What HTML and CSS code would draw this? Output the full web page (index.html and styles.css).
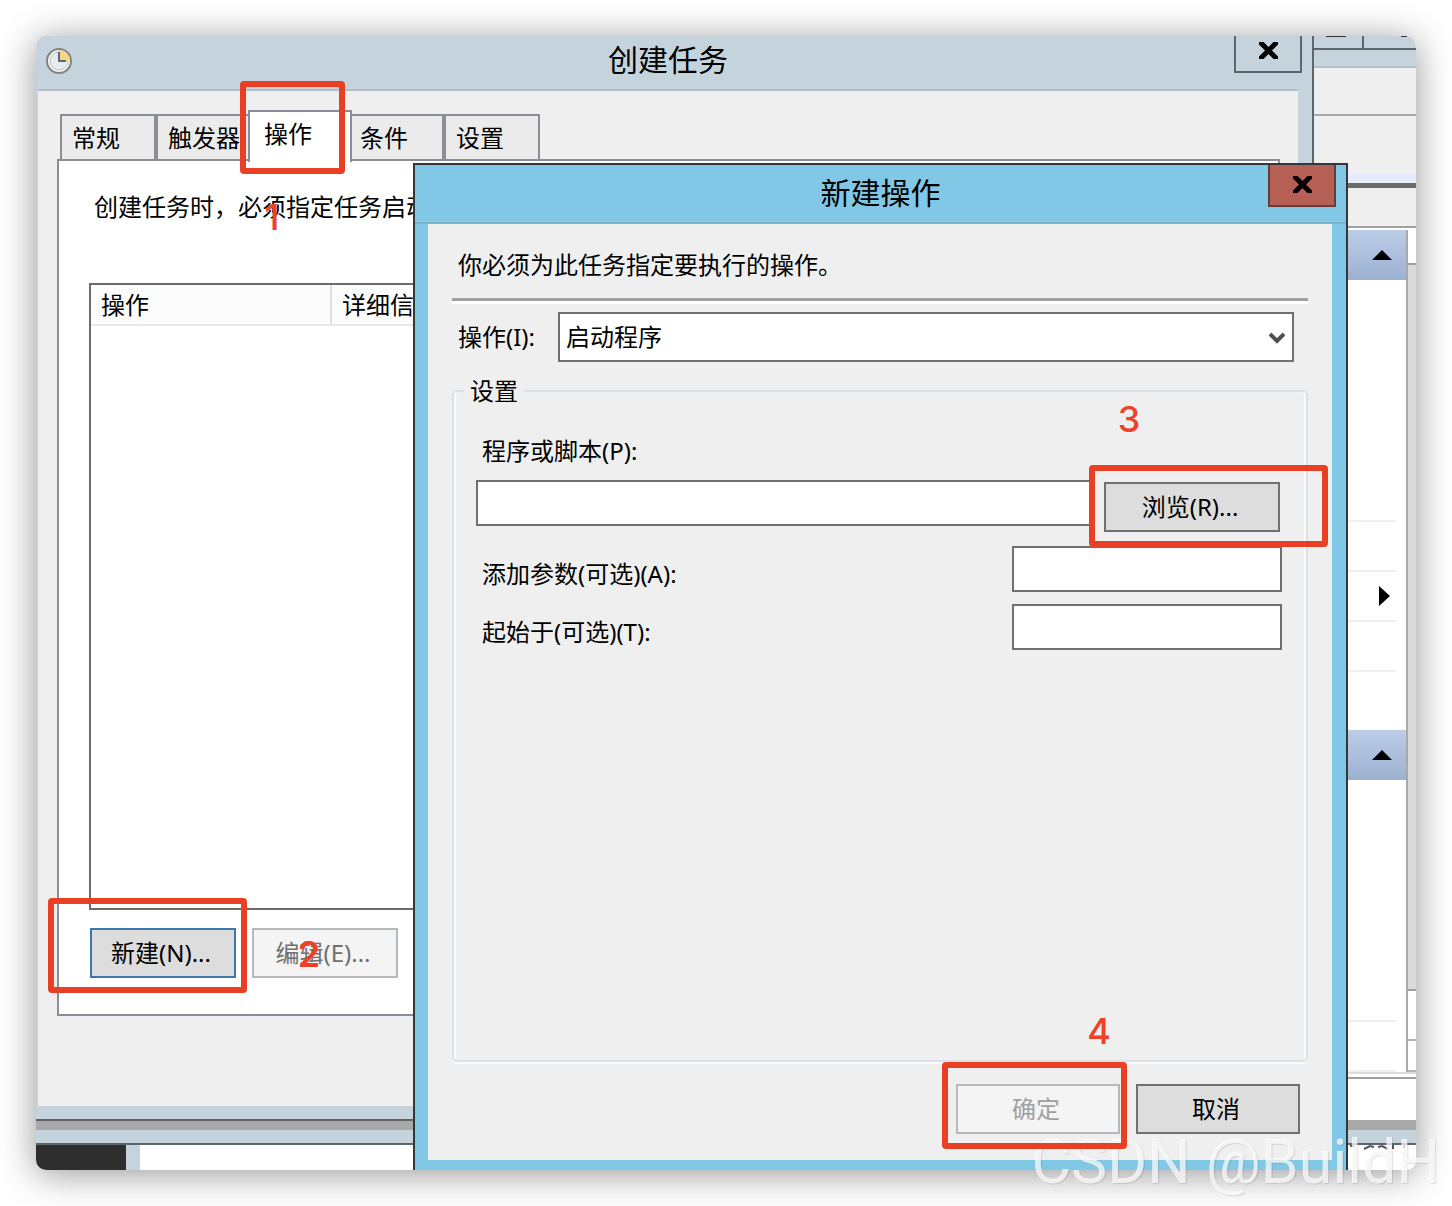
FILE: index.html
```html
<!DOCTYPE html>
<html lang="zh-CN">
<head>
    <meta charset="UTF-8">
    <meta name="viewport" content="width=device-width, initial-scale=1.0">
    <title>创建任务</title>
    <link rel="stylesheet" href="styles.css">
</head>
<body>
    <div class="desktop">

        <!-- task scheduler console behind the dialogs -->
        <div class="console">
            <div class="console-title">
                <span class="caption-box"><i class="caption-min"></i></span>
                <span class="caption-box"><i class="caption-dot"></i></span>
            </div>
            <div class="console-menu"></div>
            <div class="console-toolbar"></div>
            <div class="console-heading"></div>
            <div class="console-main">
                <div class="actions">
                    <div class="actions-head">
                        <svg width="20" height="10" viewBox="0 0 20 10"><path d="M10 0L20 10H0Z"/></svg>
                    </div>
                    <ul class="actions-list">
                        <li></li>
                        <li></li>
                        <li><svg width="11" height="20" viewBox="0 0 11 20"><path d="M0 0L11 10L0 20Z"/></svg></li>
                        <li></li>
                    </ul>
                    <div class="actions-head">
                        <svg width="20" height="10" viewBox="0 0 20 10"><path d="M10 0L20 10H0Z"/></svg>
                    </div>
                    <ul class="actions-list">
                        <li></li>
                        <li></li>
                    </ul>
                </div>
                <div class="scrollbar">
                    <div class="scroll-up"></div>
                    <div class="scroll-thumb"></div>
                    <div class="scroll-track"></div>
                    <div class="scroll-down"></div>
                </div>
            </div>
            <div class="console-status"></div>
            <div class="console-shade"></div>
            <div class="console-edge"></div>
            <div class="console-below">
                <div class="below-dark"></div>
                <div class="below-gap"></div>
                <div class="below-page">
                    <svg width="66" height="6" viewBox="0 0 66 6" fill="none" stroke="#556" stroke-width="2"><path d="M0 1h4M14 4l6-3 4 1M28 2l4-1 6 3M43 0v4M54 0v3"/></svg>
                </div>
            </div>
        </div>

        <div class="window task-window">
            <div class="titlebar">
                <svg class="clock" width="28" height="28" viewBox="0 0 28 28">
                    <circle cx="14" cy="14" r="12" fill="#f4f6f6" stroke="#85837d" stroke-width="2"/>
                    <circle cx="14" cy="14" r="9" fill="#e6edf1" stroke="#b4c0c8"/>
                    <path d="M14 14V3A11 11 0 0 1 25 14Z" fill="#f3d688"/>
                    <path d="M14 5V14H21" fill="none" stroke="#5b6a76" stroke-width="2"/>
                </svg>
                <h1>创建任务</h1>
                <button class="close" type="button" aria-label="关闭">
                    <svg width="19" height="17" viewBox="0 0 19 17"><path d="M-1 -2L20 19M20 -2L-1 19"/></svg>
                </button>
            </div>
            <div class="task-body">
                <div class="tabs" role="tablist">
                    <button class="tab" type="button" role="tab">常规</button>
                    <button class="tab" type="button" role="tab">触发器</button>
                    <button class="tab active" type="button" role="tab" aria-selected="true">操作</button>
                    <button class="tab" type="button" role="tab">条件</button>
                    <button class="tab" type="button" role="tab">设置</button>
                </div>
                <div class="tab-panel" role="tabpanel">
                    <p>创建任务时，必须指定任务启动时发生的操作。</p>
                    <div class="list">
                        <table>
                            <thead>
                                <tr><th class="col-action">操作</th><th>详细信息</th></tr>
                            </thead>
                        </table>
                    </div>
                    <div class="list-buttons">
                        <button class="btn default" type="button">新建(N)...</button>
                        <button class="btn" type="button" disabled>编辑(E)...</button>
                    </div>
                </div>
            </div>
        </div>

        <form class="window action-dialog">
            <div class="titlebar">
                <h2>新建操作</h2>
                <button class="close" type="button" aria-label="关闭">
                    <svg width="19" height="17" viewBox="0 0 19 17"><path d="M-1 -2L20 19M20 -2L-1 19"/></svg>
                </button>
            </div>
            <div class="dialog-body">
                <p>你必须为此任务指定要执行的操作。</p>
                <hr>
                <div class="action-row">
                    <label for="action">操作(I):</label>
                    <div class="select">
                        <select id="action"><option>启动程序</option></select>
                        <svg width="16" height="13" viewBox="0 0 16 13"><path d="M1 2L8 9L15 2" fill="none" stroke="#505050" stroke-width="4"/></svg>
                    </div>
                </div>
                <fieldset>
                    <legend>设置</legend>
                    <div class="fields">
                        <label for="program">程序或脚本(P):</label>
                        <div class="program-row">
                            <input id="program" type="text">
                            <button class="btn" type="button">浏览(R)...</button>
                        </div>
                        <div class="field-row">
                            <label for="args">添加参数(可选)(A):</label>
                            <input id="args" type="text">
                        </div>
                        <div class="field-row">
                            <label for="start">起始于(可选)(T):</label>
                            <input id="start" type="text">
                        </div>
                    </div>
                </fieldset>
                <div class="dialog-buttons">
                    <button class="btn" type="submit" disabled>确定</button>
                    <button class="btn" type="button">取消</button>
                </div>
            </div>
        </form>

        <!-- step markers -->
        <div class="mark mark-1"></div>
        <div class="mark mark-2"></div>
        <div class="mark mark-3"></div>
        <div class="mark mark-4"></div>
        <span class="step step-1">1</span>
        <span class="step step-2">2</span>
        <span class="step step-3">3</span>
        <span class="step step-4">4</span>
    </div>
    <div class="watermark">CSDN @BuildH</div>
</body>
</html>
```
FILE: styles.css
```css
* {
    box-sizing: border-box;
}
body {
    margin: 0;
    padding: 36px;
    height: 100vh;
    position: relative;
    overflow: hidden;
    background: #fff;
    color: #000;
    font-family: "Noto Sans", "Noto Sans CJK SC", sans-serif;
    font-size: 24px;
    line-height: 32px;
}
button, input, select {
    font: inherit;
    color: inherit;
    border-radius: 0;
    margin: 0;
}
h1, h2, p, ul {
    margin: 0;
    padding: 0;
}
svg {
    display: block;
}
.desktop {
    position: relative;
    height: 100%;
    border-radius: 10px;
    overflow: hidden;
    background: #fff;
}
/* the shadow sits on the body so the rounded desktop can clip its windows */
body::before {
    content: "";
    position: absolute;
    inset: 36px;
    border-radius: 10px;
    box-shadow: 0 4px 36px rgba(0, 0, 0, 0.42);
}

/* console */
.console {
    display: flex;
    flex-direction: column;
    height: 100%;
}
.console-title {
    height: 32px;
    display: flex;
    justify-content: flex-end;
    align-items: flex-start;
    background: #c5d4dc;
    border-bottom: 2px solid #b4bfc6;
}
.caption-box {
    display: flex;
    justify-content: center;
    width: 54px;
    height: 14px;
    border: solid #5f666b;
    border-width: 0 0 2px 2px;
}
.caption-min {
    width: 20px;
    height: 1px;
    background: #333;
}
.caption-dot {
    width: 6px;
    height: 1px;
    margin-left: 28px;
    background: #333;
}
.console-menu {
    height: 48px;
    background: #efefef;
    border-bottom: 2px solid #a9a9a9;
}
.console-toolbar {
    height: 72px;
    background: linear-gradient(#efefef 58px, #e6ecfc 58px, #e6ecfc 65px, #efefef 65px);
    border-bottom: 5px solid #6c6c6c;
}
.console-heading {
    height: 40px;
    background: #efefef;
    border-bottom: 2px solid #a0a0a0;
}
.console-main {
    flex: 1;
    display: flex;
    min-height: 0;
    padding-top: 2px;
    border-bottom: 2px solid #dcdcdc;
}
.actions {
    flex: 1;
    overflow: hidden;
}
.actions-head {
    height: 50px;
    display: flex;
    justify-content: flex-end;
    align-items: center;
    padding-right: 14px;
    background: linear-gradient(#bccde8, #9cb1d1);
}
.actions-list {
    list-style: none;
    padding: 192px 10px 0 0;
    height: 450px;
}
.actions-list li {
    height: 50px;
    display: flex;
    justify-content: flex-end;
    align-items: center;
    padding-right: 6px;
    border-bottom: 2px solid #efefef;
}
.scrollbar {
    width: 10px;
    display: flex;
    flex-direction: column;
    border-left: 2px solid #a9a9a9;
}
.scroll-up {
    height: 33px;
}
.scroll-thumb {
    flex: 1;
    background: #dadada;
    border: solid #a0a0a0;
    border-width: 2px 0;
}
.scroll-track {
    height: 48px;
}
.scroll-down {
    height: 33px;
    border: solid #b4b4b4;
    border-width: 2px 0;
}
.console-status {
    height: 43px;
    border-top: 2px solid #a0a0a0;
    margin-top: 3px;
}
.console-shade {
    height: 10px;
    background: #a9a9a9;
}
.console-edge {
    height: 15px;
    background: #c5d4dc;
    border-bottom: 2px solid #5f666b;
}
.console-below {
    height: 25px;
    display: flex;
}
.below-dark {
    width: 90px;
    background: #2e2e2e;
}
.below-gap {
    width: 14px;
    background: #c5d4dc;
}
.below-page {
    flex: 1;
    display: flex;
    justify-content: flex-end;
}

/* windows */
.window {
    position: absolute;
    display: flex;
    flex-direction: column;
}
.titlebar {
    position: relative;
    text-align: center;
}
.titlebar h1,
.titlebar h2 {
    font-size: 30px;
    font-weight: normal;
}
.close {
    position: absolute;
    top: 0;
    display: flex;
    justify-content: center;
    width: 68px;
    padding: 0;
    border: 2px solid #5f666b;
    border-top: 0;
    background: none;
}
.close svg path {
    stroke: #000;
    stroke-width: 5;
}
.btn {
    height: 50px;
    padding: 0 4px 0 0;
    border: 2px solid #707070;
    background: #ddd;
}
.btn:disabled {
    border-color: #b5b9bb;
    background: #f4f4f4;
    color: #707070;
}
.btn.default {
    border-color: #3f77ad;
}

/* create task */
.task-window {
    top: 0;
    left: 0;
    right: 102px;
    bottom: 49px;
    background: #c5d4dc;
    border: solid #5f666b;
    border-width: 0 2px 2px 0;
}
.task-window .titlebar {
    height: 53px;
    padding-right: 12px;
}
.task-window h1 {
    line-height: 48px;
}
.task-window .close {
    right: 10px;
    height: 37px;
    padding-top: 6px;
}
.clock {
    position: absolute;
    left: 9px;
    top: 11px;
}
.task-body {
    flex: 1;
    display: flex;
    flex-direction: column;
    margin: 0 14px 13px 2px;
    padding: 20px 18px 90px 19px;
    border-top: 2px solid #b4bfc8;
    background: #efefef;
}
.tabs {
    display: flex;
    align-items: flex-end;
    height: 48px;
    padding-left: 3px;
}
.tab {
    width: 96px;
    height: 45px;
    padding: 0 0 0 10px;
    border: 2px solid #8b8d98;
    border-bottom: 0;
    background: #ebebeb;
    text-align: left;
    white-space: nowrap;
}
.tab.active {
    position: relative;
    z-index: 1;
    width: 104px;
    height: 52px;
    margin: 0 -4px -3px;
    padding: 0 0 6px 14px;
    background: #fff;
}
.tab-panel {
    flex: 1;
    display: flex;
    flex-direction: column;
    padding: 30px 30px 36px;
    border: 2px solid #8b8d98;
    background: #fff;
}
.tab-panel p {
    padding-left: 5px;
}
.list {
    flex: 1;
    margin: 60px 0 18px;
    border: 2px solid #6b6b6b;
}
.list table {
    width: 100%;
    border-collapse: collapse;
}
.list th {
    height: 40px;
    padding: 0 10px;
    border-right: 2px solid #dedede;
    border-bottom: 2px solid #e8e8e8;
    background: #fcfcfc;
    font-weight: normal;
    text-align: left;
}
.list .col-action {
    width: 240px;
}
.list-buttons {
    display: flex;
    gap: 16px;
    padding-left: 1px;
}
.list-buttons .btn {
    width: 146px;
}

/* new action */
.action-dialog {
    top: 127px;
    left: 377px;
    right: 68px;
    bottom: 0;
    background: #80c8e6;
    border: 2px solid #33373a;
    border-bottom: 0;
}
.action-dialog .titlebar {
    height: 59px;
    border-bottom: 2px solid #7bb2cc;
}
.action-dialog h2 {
    line-height: 56px;
}
.action-dialog .close {
    right: 10px;
    height: 42px;
    padding-top: 11px;
    border-color: #6b3b37;
    background: #b65f54;
}
.dialog-body {
    flex: 1;
    display: flex;
    flex-direction: column;
    margin: 0 14px 10px 13px;
    padding: 25px 24px 26px;
    background: #efefef;
}
.dialog-body p {
    padding-left: 6px;
}
hr {
    width: 100%;
    height: 6px;
    margin: 17px 0 8px;
    border: solid #a0a0a0;
    border-width: 3px 0 0;
    background: #fff;
}
.action-row {
    display: flex;
    align-items: center;
    padding: 0 14px 0 6px;
}
.action-row label {
    width: 100px;
}
.select {
    position: relative;
    flex: 1;
}
.select select {
    display: block;
    width: 100%;
    height: 50px;
    padding: 0 6px;
    border: 2px solid #707070;
    background: #fff;
    appearance: none;
}
.select svg {
    position: absolute;
    right: 9px;
    top: 20px;
}
fieldset {
    flex: 1;
    min-width: 0;
    margin: 13px 0 22px;
    padding: 0 10px;
    border: 2px solid #dae2e8;
    border-radius: 5px;
    box-shadow: inset 2px 0 #fafafa, inset -2px 0 #fafafa, 0 2px #fafafa;
}
legend {
    padding: 0 6px;
}
.fields {
    padding: 26px 14px 0 12px;
}
.fields label {
    display: block;
    padding-left: 6px;
    line-height: 36px;
}
.fields input {
    height: 46px;
    padding: 0 6px;
    border: 2px solid #707070;
    background: #fff;
}
.program-row {
    display: flex;
    align-items: flex-start;
    gap: 12px;
    margin: 11px 2px 14px 0;
}
.program-row input {
    flex: 1;
    min-width: 0;
}
.program-row .btn {
    width: 176px;
    margin-top: 2px;
}
.field-row {
    display: flex;
    justify-content: space-between;
    align-items: flex-end;
    margin-bottom: 12px;
}
.field-row input {
    width: 270px;
}
.dialog-buttons {
    display: flex;
    justify-content: flex-end;
    gap: 16px;
    padding-right: 8px;
}
.dialog-buttons .btn {
    width: 164px;
}
.dialog-buttons .btn:disabled {
    color: #a0a0a0;
}

/* step markers */
.mark {
    position: absolute;
    z-index: 2;
    border: 6px solid #e93f25;
    border-radius: 4px;
}
.mark-1 {
    left: 204px;
    top: 45px;
    width: 105px;
    height: 93px;
}
.mark-2 {
    left: 12px;
    bottom: 177px;
    width: 199px;
    height: 95px;
}
.mark-3 {
    right: 88px;
    top: 429px;
    width: 239px;
    height: 82px;
}
.mark-4 {
    right: 289px;
    bottom: 21px;
    width: 185px;
    height: 87px;
}
.step {
    position: absolute;
    z-index: 2;
    width: 56px;
    line-height: 66px;
    color: #ee4128;
    font-family: Inter, sans-serif;
    font-size: 36px;
    font-weight: 500;
    text-align: center;
}
.step-1 {
    left: 208px;
    top: 148px;
}
.step-2 {
    left: 245px;
    bottom: 183px;
    font-weight: 600;
}
.step-3 {
    right: 259px;
    top: 350px;
}
.step-4 {
    right: 289px;
    bottom: 106px;
}
.watermark {
    position: absolute;
    right: 12px;
    bottom: 8px;
    color: rgba(255, 255, 255, 0.75);
    font-family: Roboto, sans-serif;
    font-size: 61px;
    line-height: 72px;
    text-shadow: 1px 1px 1px rgba(0, 0, 0, 0.12);
    white-space: nowrap;
}
```
